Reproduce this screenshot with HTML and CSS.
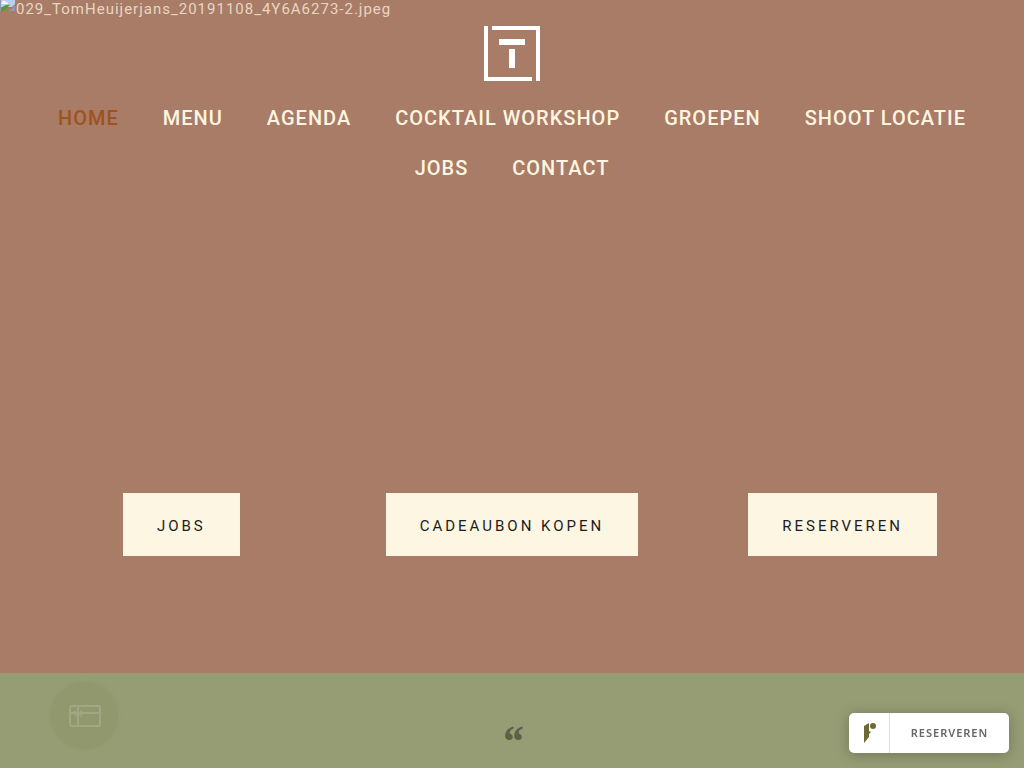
FILE: index.html
```html
<!doctype html>
<html lang="nl">
  <head>
    <meta charset="UTF-8" />
    <meta name="viewport" content="width=device-width, initial-scale=1.0" />
    <title>Home</title>
    <link rel="stylesheet" href="styles.css">
  </head>
  <body>
    <section class="hero">
      <div class="hero-image">
        <svg width="16" height="16" viewBox="0 0 16 16" aria-hidden="true">
          <path fill="#b9cdf0" d="M0 0h15v11H0z" />
          <path fill="#f5f8ff" d="M2 7a2 2 0 0 1 4-1 2 2 0 0 1 2 2H1z" />
          <path fill="#4fa032" d="M0 15c2-5 6-7 10-6l-6 6z" />
          <path fill="#a97c67" d="M15 8v2l-6 5H7l6-5z" />
          <path fill="#8e9bb2" d="M9 15l6-5v5zM0 0h1v15H0z" />
        </svg>
        <span>029_TomHeuijerjans_20191108_4Y6A6273-2.jpeg</span>
      </div>
      <header class="header">
        <a class="logo" href="#" aria-label="Home">
          <svg width="56" height="56" viewBox="0 0 56 56" fill="#fff">
            <path d="M0 0h4v51h44v4H0z" />
            <path d="M8 0h48v55h-4V4H8z" />
            <path d="M15 13h26v6H15zM25 23h6v19h-6z" />
          </svg>
        </a>
        <nav class="nav">
          <a class="active" href="#">HOME</a>
          <a href="#">MENU</a>
          <a href="#">AGENDA</a>
          <a href="#">COCKTAIL WORKSHOP</a>
          <a href="#">GROEPEN</a>
          <a href="#">SHOOT LOCATIE</a>
          <a href="#">JOBS</a>
          <a href="#">CONTACT</a>
        </nav>
      </header>
      <div class="actions">
        <a class="btn" href="#">JOBS</a>
        <a class="btn" href="#">CADEAUBON KOPEN</a>
        <a class="btn" href="#">RESERVEREN</a>
      </div>
    </section>

    <section class="quote">
      <span class="quote-mark">“</span>
    </section>

    <button class="giftcard" type="button" aria-label="Cadeaubon">
      <svg width="32" height="22" viewBox="0 0 32 22" fill="none" stroke="#fff" stroke-width="2">
        <rect x="1" y="1" width="30" height="20" rx="2" />
        <path d="M9 1v20M1 8h30" />
        <path stroke-width="1" d="M9 8L5 6v4zM9 8l4-2v4zM9 8l-3 4M9 8l3 4" />
      </svg>
    </button>

    <button class="reserve" type="button">
      <span class="reserve-icon">
        <svg width="14" height="22" viewBox="0 0 14 22" fill="#6b6a35">
          <path d="M2 4l5-3v8l2 1-2 2v3l-5 6z" />
          <circle cx="11" cy="4" r="3" />
        </svg>
      </span>
      <span class="reserve-label">RESERVEREN</span>
    </button>
  </body>
</html>
```
FILE: styles.css
```css
* {
  box-sizing: border-box;
}

body {
  margin: 0;
  background-color: #969d74;
  font-family: Roboto, "Noto Sans", sans-serif;
}

a {
  text-decoration: none;
}

.hero {
  position: relative;
  display: flex;
  flex-direction: column;
  justify-content: space-between;
  min-height: 673px;
  padding: 26px 16px 117px;
  background-color: #a97c67;
}

.hero-image {
  position: absolute;
  top: 0;
  left: 0;
  display: flex;
  color: #e8d6c0;
  font-size: 15px;
  line-height: 18px;
  letter-spacing: 1px;
}

.hero-image svg {
  margin-top: -4px;
}

.header {
  display: flex;
  flex-direction: column;
  align-items: center;
  gap: 11px;
}

.logo,
.logo svg {
  display: block;
}

.nav {
  display: flex;
  flex-wrap: wrap;
  justify-content: center;
  column-gap: 44px;
}

.nav a {
  color: #fdf5e0;
  font-size: 20px;
  font-weight: 500;
  line-height: 50px;
  letter-spacing: 1px;
}

.nav .active {
  color: #a0521e;
}

.actions {
  display: grid;
  grid-template-columns: repeat(3, 1fr);
  justify-items: center;
}

.btn {
  padding: 3px 34px 0;
  background-color: #fcf6e2;
  color: #1d1d1d;
  font-size: 15px;
  line-height: 60px;
  letter-spacing: 3px;
}

.quote {
  padding-top: 44px;
  text-align: center;
}

.quote-mark {
  display: block;
  color: #5c6047;
  font-family: "Liberation Serif", serif;
  font-size: 44px;
  font-style: italic;
  font-weight: bold;
  line-height: 50px;
}

.giftcard {
  position: fixed;
  left: 51px;
  bottom: 19px;
  display: flex;
  align-items: center;
  justify-content: center;
  width: 67px;
  height: 67px;
  padding: 0;
  border: none;
  border-radius: 50%;
  background-color: #6b6a35;
  box-shadow: 0 0 4px #6b6a35;
  opacity: 0.1;
  cursor: pointer;
}

.reserve {
  position: fixed;
  right: 15px;
  bottom: 15px;
  display: flex;
  align-items: center;
  width: 160px;
  height: 40px;
  padding: 0;
  border: none;
  border-radius: 5px;
  background-color: #fff;
  box-shadow: 0 2px 14px rgba(0, 0, 0, 0.25);
  cursor: pointer;
}

.reserve-icon {
  display: flex;
  align-items: center;
  justify-content: center;
  width: 41px;
  height: 40px;
  border-right: 1px solid #ddd;
}

.reserve-label {
  flex: 1;
  color: #666;
  font-family: "Noto Sans", sans-serif;
  font-size: 11px;
  font-weight: 600;
  line-height: 14px;
  letter-spacing: 1px;
}
```
